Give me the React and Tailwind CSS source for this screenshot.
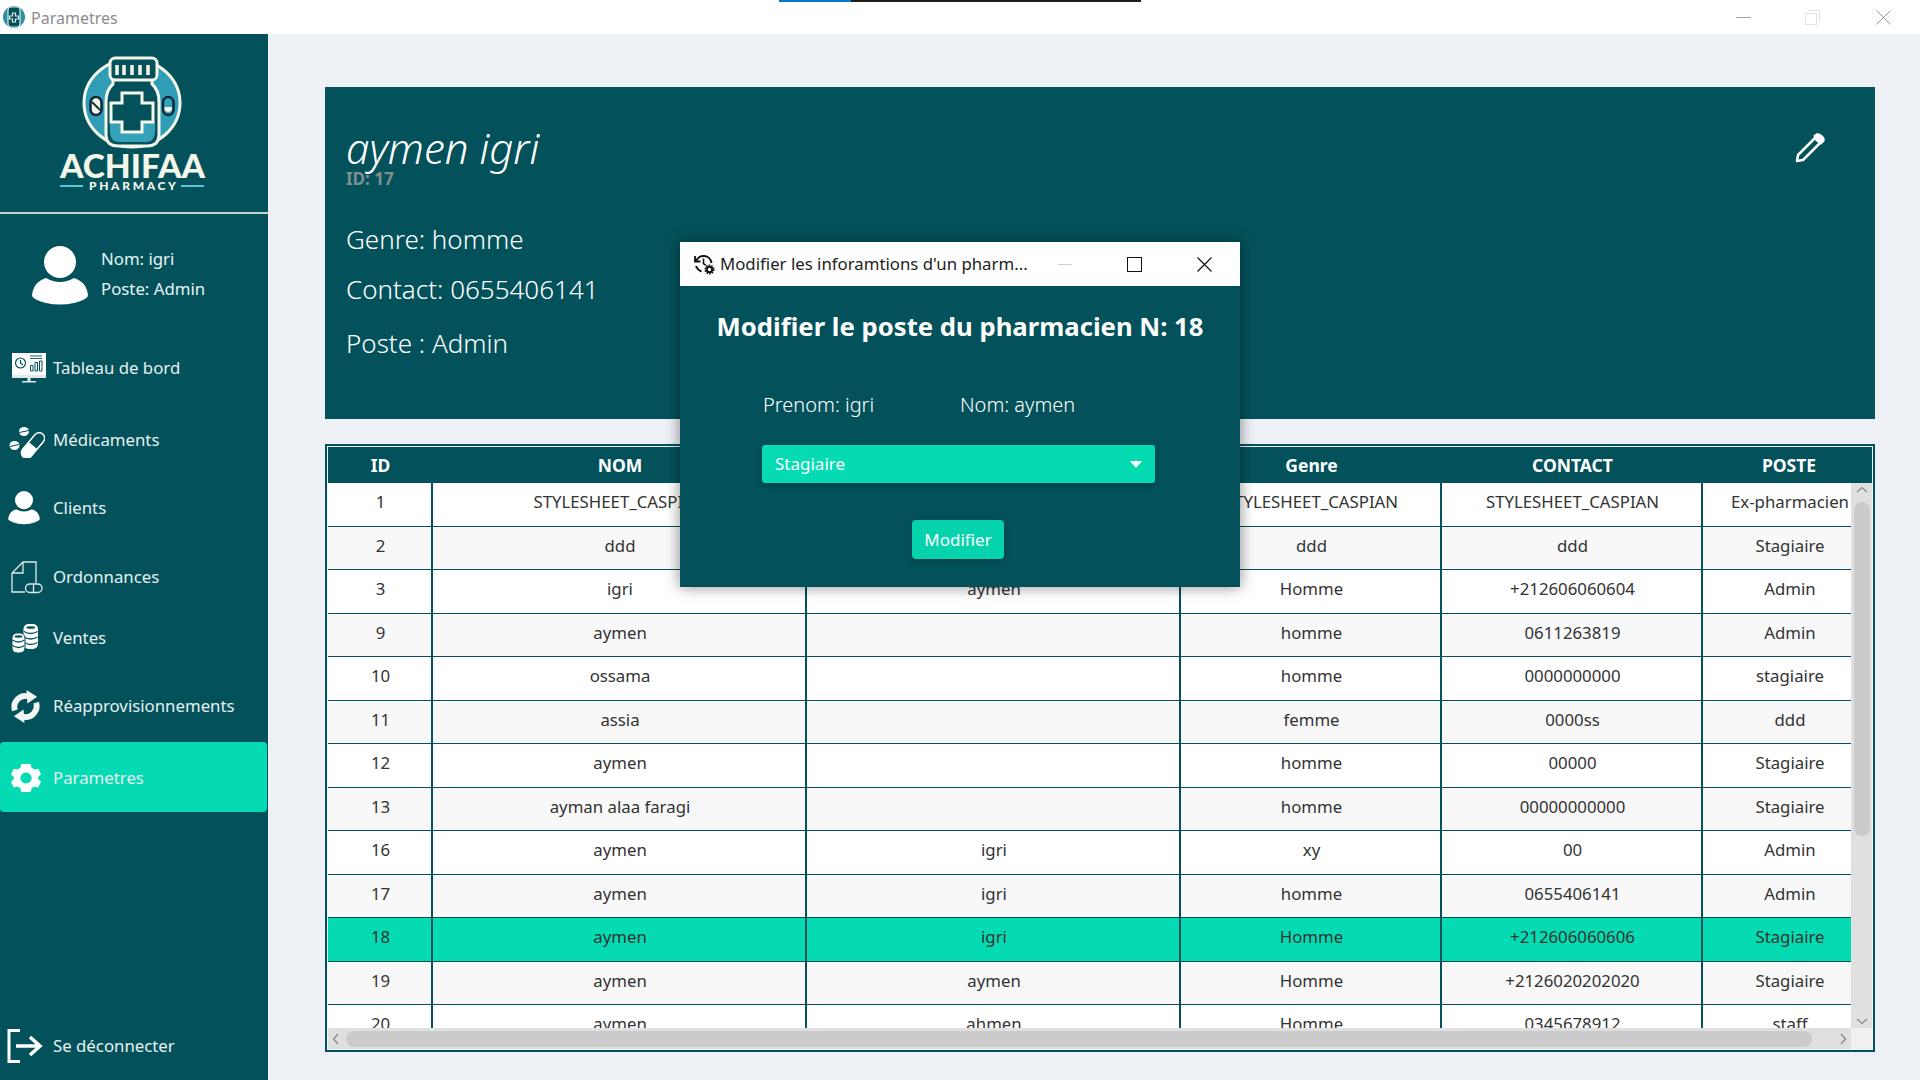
const TEAL = "#03525b";

const rows = [
  ["1", "STYLESHEET_CASPIAN", "STYLESHEET_CASPIAN", "STYLESHEET_CASPIAN", "STYLESHEET_CASPIAN", "Ex-pharmacien"],
  ["2", "ddd", "ddd", "ddd", "ddd", "Stagiaire"],
  ["3", "igri", "aymen", "Homme", "+212606060604", "Admin"],
  ["9", "aymen", "", "homme", "0611263819", "Admin"],
  ["10", "ossama", "", "homme", "0000000000", "stagiaire"],
  ["11", "assia", "", "femme", "0000ss", "ddd"],
  ["12", "aymen", "", "homme", "00000", "Stagiaire"],
  ["13", "ayman alaa faragi", "", "homme", "00000000000", "Stagiaire"],
  ["16", "aymen", "igri", "xy", "00", "Admin"],
  ["17", "aymen", "igri", "homme", "0655406141", "Admin"],
  ["18", "aymen", "igri", "Homme", "+212606060606", "Stagiaire"],
  ["19", "aymen", "aymen", "Homme", "+2126020202020", "Stagiaire"],
  ["20", "aymen", "ahmen", "Homme", "0345678912", "staff"],
];

const headers = ["ID", "NOM", "PRENOM", "Genre", "CONTACT", "POSTE"];

const Logo = () => (
  <svg viewBox="58 52 150 142" className="w-[150px] h-[142px] mr-[2px]">
    <ellipse cx="132" cy="103" rx="48" ry="44" fill="#2f9db5" stroke="#f4f6ea" strokeWidth="3" />
    <path d="M113 78 L113 84 Q106 90 106 102 V134 Q106 146 118 146 H147 Q159 146 159 134 V102 Q159 90 152 84 V78 Z" fill={TEAL} stroke="#f4f6ea" strokeWidth="3" strokeLinejoin="round" />
    <path d="M110 123 H155 V132 Q155 142 145 142 H120 Q110 142 110 132 Z" fill="#35a2ba" />
    <rect x="110" y="58" width="47" height="22" rx="5" fill={TEAL} stroke="#f4f6ea" strokeWidth="3" />
    <path d="M117 65 v10 M124 65 v10 M132 65 v10 M140 65 v10 M148 65 v10" stroke="#f4f6ea" strokeWidth="3.500" />
    <path d="M122 93 H142 V103 H153 V122 H142 V132 H122 V122 H111 V103 H122 Z" fill={TEAL} stroke="#f4f6ea" strokeWidth="3" />
    <rect x="90.500" y="97" width="11" height="18" rx="5.500" fill="#f4f6ea" stroke="#10283a" strokeWidth="2.500" />
    <path d="M92 102 l8 8" stroke="#10283a" strokeWidth="1.800" />
    <rect x="163" y="97" width="10.500" height="18" rx="5.200" fill="#35a2ba" stroke="#10283a" strokeWidth="2.500" />
    <path d="M164.500 107 h7.500 v3 q-3.700 4 -7.500 0 z" fill="#f4f6ea" />
    <text x="60" y="178" textLength="145" lengthAdjust="spacingAndGlyphs" fill="#f4f6ea" fontSize="32" fontWeight="900" fontFamily="Lato, sans-serif">ACHIFAA</text>
    <text x="89" y="190" textLength="87" fill="#f4f6ea" fontSize="12" fontWeight="900" fontFamily="Lato, sans-serif">PHARMACY</text>
    <path d="M60 186 H83 M181 186 H204" stroke="#5ec4d6" strokeWidth="2" />
  </svg>
);

const AppIcon = () => (
  <svg viewBox="0 0 24 24" className="w-[24px] h-[24px]">
    <circle cx="12" cy="12" r="11" fill="#2f8ea5" />
    <rect x="6" y="2" width="12" height="20" rx="3" fill={TEAL} stroke="#dfe8e4" strokeWidth="1.200" />
    <path d="M10.500 8 h3 v3 h3 v3 h-3 v3 h-3 v-3 h-3 v-3 h3 z" fill={TEAL} stroke="#dfe8e4" strokeWidth="1.200" />
  </svg>
);

const DashIcon = () => (
  <svg viewBox="0 0 34 30" className="w-[34px] h-[30px]">
    <rect x="0" y="0" width="34" height="22" fill="#fff" />
    <rect x="0" y="22" width="34" height="3" fill="#dfe9ea" />
    <rect x="15.500" y="25" width="3" height="3" fill="#dfe9ea" />
    <rect x="10" y="28" width="14" height="1.500" fill="#dfe9ea" />
    <circle cx="8.500" cy="10" r="5" fill="none" stroke={TEAL} strokeWidth="1.200" />
    <path d="M8.500 7 v3 l2.500 2" fill="none" stroke={TEAL} strokeWidth="1.200" />
    <path d="M18 3 h12 M18 5.500 h12" stroke={TEAL} strokeWidth="0.900" />
    <path d="M18.500 12.500 h2.500 v5.500 h-2.500 z M23 9.500 h2.500 v8.500 h-2.500 z M27.500 8 h2.500 v10 h-2.500 z" fill="none" stroke={TEAL} strokeWidth="1" />
  </svg>
);

const PillsIcon = () => (
  <svg viewBox="0 0 36 36" className="w-[36px] h-[36px]">
    <g transform="rotate(40 24 23.500)">
      <rect x="18.500" y="8.500" width="11" height="30" rx="5.500" fill="none" stroke="#fff" strokeWidth="1.500" />
      <path d="M18.500 23.500 h11 v9.500 a5.500 5.500 0 0 1 -11 0 z" fill="#fff" />
    </g>
    <ellipse cx="15" cy="9.500" rx="5" ry="4.500" fill="#fff" />
    <path d="M10 10.500 l10 -2" stroke={TEAL} strokeWidth="1.200" />
    <ellipse cx="5.500" cy="23.500" rx="5" ry="4.500" fill="#fff" />
    <path d="M1 24.500 l9 -2" stroke={TEAL} strokeWidth="1.200" />
  </svg>
);

const UserIcon = ({ className }) => (
  <svg viewBox="0 0 56 60" className={className}>
    <circle cx="28" cy="16" r="16" fill="#fff" />
    <path d="M0 50 q1 -14 14 -18 q14 8 28 0 q13 4 14 18 q-2 4 -14 7 q-14 3 -28 0 q-12 -3 -14 -7 z" fill="#fff" />
  </svg>
);

const OrdoIcon = () => (
  <svg viewBox="0 0 32 33" className="w-[32px] h-[33px]" fill="none" stroke="#dfe9ea" strokeWidth="1.300">
    <path d="M25 22 V1 H12 L1 12 V31 H14" />
    <path d="M12 1 V12 H1" />
    <rect x="14.500" y="23" width="16.500" height="8.500" rx="4.250" />
    <path d="M22.500 23 v8.500" />
  </svg>
);

const CoinsIcon = () => (
  <svg viewBox="0 0 26 29" className="w-[26px] h-[29px]">
    <rect x="11.500" y="0" width="14.500" height="25" rx="5" fill="#fff" />
    <ellipse cx="18.700" cy="3.500" rx="4.500" ry="1.300" fill={TEAL} />
    <path d="M12 7.500 Q18.700 11.500 25.500 7.500 M12 13 Q18.700 17 25.500 13 M12 18.500 Q18.700 22.500 25.500 18.500" fill="none" stroke={TEAL} strokeWidth="1.400" />
    <rect x="0" y="9" width="13" height="20" rx="5" fill="#fff" stroke={TEAL} strokeWidth="1" />
    <ellipse cx="6.500" cy="12.500" rx="4" ry="1.200" fill={TEAL} />
    <path d="M0.500 16 Q6.500 20 12.500 16 M0.500 21.500 Q6.500 25.500 12.500 21.500" fill="none" stroke={TEAL} strokeWidth="1.400" />
  </svg>
);

const SyncIcon = () => (
  <svg viewBox="0 0 30 34" className="w-[29px] h-[33px]">
    <g>
      <path d="M4 21 A11.500 11.500 0 0 1 18 6.500" fill="none" stroke="#f4f6f6" strokeWidth="6" />
      <path d="M16 0 L27 7 L17 14 Z" fill="#f4f6f6" />
    </g>
    <g transform="rotate(180 15 17)">
      <path d="M4 21 A11.500 11.500 0 0 1 18 6.500" fill="none" stroke="#f4f6f6" strokeWidth="6" />
      <path d="M16 0 L27 7 L17 14 Z" fill="#f4f6f6" />
    </g>
  </svg>
);

const GearIcon = () => (
  <svg viewBox="0 0 32 32" className="w-[30px] h-[30px]">
    <path
      fill="#fff"
      fillRule="evenodd"
      d="M11 1 h10 l1 4 l3 2 l4 -1 l3 6 l-3 3 v2 l3 3 l-3 6 l-4 -1 l-3 2 l-1 4 h-10 l-1 -4 l-3 -2 l-4 1 l-3 -6 l3 -3 v-2 l-3 -3 l3 -6 l4 1 l3 -2 z M16 10 a6 6 0 1 0 0.010 0 z"
    />
  </svg>
);

const LogoutIcon = () => (
  <svg viewBox="0 0 36 34" className="w-[36px] h-[34px]" fill="none" stroke="#fff">
    <path d="M13 1.500 H2 V32.500 H13" strokeWidth="3" />
    <path d="M9 17 H32 M23 8 L33 17 L23 26" strokeWidth="3.500" />
  </svg>
);

const PencilIcon = () => (
  <svg viewBox="0 0 30 30" className="w-[30px] h-[30px]" fill="none" stroke="#fff" strokeWidth="2.500">
    <path d="M2 28 L3 22 L20 5 L25 10 L8 27 Z" strokeLinejoin="round" />
    <path d="M20 3 L22 1.500 Q24 1 26 3 L28 5 Q29 7 28 8 L26 10 Z" fill="#fff" />
  </svg>
);

const HistoryGearIcon = () => (
  <svg viewBox="0 0 22 22" className="w-[22px] h-[22px]" fill="none" stroke="#111" strokeWidth="2">
    <path d="M3 8.500 A8 8 0 0 1 18.500 10" />
    <path d="M2 3 V8.500 H7.500" strokeWidth="1.800" />
    <path d="M10.500 5.500 V10.500 L13 12.500" strokeWidth="1.600" />
    <path d="M3 13 Q4.500 17 8.500 18.500" />
    <circle cx="16.500" cy="16.500" r="2.700" strokeWidth="2" />
    <circle cx="16.500" cy="16.500" r="4.300" strokeWidth="1.500" strokeDasharray="1.600 1.100" />
  </svg>
);

const CloseIcon = ({ color, width }) => (
  <svg viewBox="0 0 15 15" className="w-[15px] h-[15px] shrink-0" fill="none" stroke={color} strokeWidth={width}>
    <path d="M0.500 0.500 L14.500 14.500 M14.500 0.500 L0.500 14.500" />
  </svg>
);

const NavItem = ({ icon, label, active, height, iconClass }) => (
  <div className={`flex items-center rounded-[4px] ${height} ${active ? "bg-[#05dbb2] pt-[2px]" : ""}`}>
    <div className={`w-[53px] shrink-0 flex justify-center ${iconClass}`}>{icon}</div>
    <span className="text-[16.800px] text-[#e6f0f0]">{label}</span>
  </div>
);

const App = () => {
  return (
    <div className="relative flex flex-col w-[1920px] h-[1080px] overflow-hidden bg-[#edf0f5] font-['Noto_Sans',sans-serif] text-[#333]">
      {/* barre de titre */}
      <div className="flex items-center h-[34px] bg-white shrink-0 pl-[2px]">
        <AppIcon />
        <span className="ml-[5px] pt-[1px] text-[16px] text-[#8c8c8c]">Parametres</span>
        <div className="ml-auto flex items-center pr-[29px]">
          <div className="w-[15px] h-px bg-[#a8a8a8]" />
          <div className="relative ml-[54px] w-[12px] h-[12px] mt-[3px] border border-[#e2e2e2]">
            <div className="absolute -top-[4px] -right-[4px] w-[12px] h-[12px] border-t border-r border-[#e2e2e2]" />
          </div>
          <div className="ml-[59px]">
            <CloseIcon color="#9a9a9a" width="1" />
          </div>
        </div>
      </div>

      <div className="absolute top-0 left-[779px] flex w-[362px] h-[2px] bg-[#1e1e1e]">
        <div className="w-[72px] bg-[#0078d4]" />
      </div>

      <div className="flex flex-1 min-h-0">
        {/* menu lateral */}
        <aside className="flex flex-col w-[268px] shrink-0 bg-[#03525b]">
          <div className="flex justify-center h-[180px] border-b-2 border-[#c3d3d4] pt-[18px]">
            <Logo />
          </div>

          <div className="flex items-center h-[122px] pl-[32px] pt-[2px]">
            <UserIcon className="w-[56px] h-[60px]" />
            <div className="ml-[13px] mb-[4px] flex flex-col gap-[6px] text-[16.800px] leading-[24px] text-[#e6f4f4]">
              <span>Nom: igri</span>
              <span>Poste: Admin</span>
            </div>
          </div>

          <nav className="flex flex-col pt-[8px]">
            <NavItem icon={<DashIcon />} label="Tableau de bord" height="h-[48px]" iconClass="pl-[5px]" />
            <NavItem icon={<PillsIcon />} label="Médicaments" height="h-[48px] mt-[24px]" />
            <NavItem icon={<UserIcon className="w-[32px] h-[34px]" />} label="Clients" height="h-[48px] mt-[20px]" iconClass="pr-[5px]" />
            <NavItem icon={<OrdoIcon />} label="Ordonnances" height="h-[48px] mt-[21px]" />
            <NavItem icon={<CoinsIcon />} label="Ventes" height="h-[48px] mt-[13px]" iconClass="pr-[4px]" />
            <NavItem icon={<SyncIcon />} label="Réapprovisionnements" height="h-[48px] mt-[20px]" iconClass="pr-[3px]" />
            <NavItem icon={<GearIcon />} label="Parametres" height="h-[70px] mt-[12px] mr-[1px]" iconClass="pr-[2px]" active />
          </nav>

          <div className="mt-auto mb-[10px]">
            <NavItem icon={<LogoutIcon />} label="Se déconnecter" height="h-[48px]" iconClass="pr-[3px]" />
          </div>
        </aside>

        {/* contenu */}
        <main className="flex-1 min-w-0 flex flex-col pl-[57px] pr-[45px] pt-[53px] pb-[28px] gap-[25px]">
          <section className="relative h-[332px] shrink-0 bg-[#03525b] pl-[21px] pt-[35px] text-white">
            <h1 className="text-[42px] leading-[52px] italic font-light">aymen igri</h1>
            <p className="-mt-[5px] text-[17px] leading-[20px] font-bold text-[#7f8f90]">ID: 17</p>
            <div className="mt-[32px] flex flex-col text-[26px] leading-[37px] font-light">
              <p className="mb-[13px]">Genre: homme</p>
              <p className="mb-[17px]">Contact: 0655406141</p>
              <p>Poste : Admin</p>
            </div>
            <div className="absolute top-[46px] right-[50px]">
              <PencilIcon />
            </div>
          </section>

          {/* tableau */}
          <section className="flex-1 min-h-0 flex flex-col border-2 border-[#03525b] bg-white p-[1px] outline-1 outline-[#eef2f4] -outline-offset-[3px]">
            <div className="grid grid-cols-[105px_374px_374px_261px_261px_172px] shrink-0 h-[36px] items-center overflow-hidden bg-[#03525b] text-white text-[17.500px] font-bold text-center">
              {headers.map((h) => (
                <span key={h}>{h}</span>
              ))}
            </div>
            <div className="flex flex-1 min-h-0">
              <div className="flex-1 min-w-0 overflow-hidden">
                {rows.map((row, i) => (
                  <div
                    key={row[0]}
                    className={`grid grid-cols-[105px_374px_374px_261px_261px_172px] h-[43.500px] border-b-[1.500px] border-[#03525b] text-[16.800px] ${
                      row[0] === "18" ? "bg-[#05dbb2]" : i % 2 === 0 ? "bg-white" : "bg-[#f8f8f8]"
                    }`}
                  >
                    {row.map((cell, j) => (
                      <div
                        key={j}
                        className={`flex items-center justify-center whitespace-nowrap overflow-hidden pb-[5px] pl-[2px] ${
                          j < 5 ? "border-r-2 border-[#03525b]" : ""
                        }`}
                      >
                        {cell}
                      </div>
                    ))}
                  </div>
                ))}
              </div>
              <div className="relative w-[21px] shrink-0 bg-[#e0e0e0]">
                <div className="absolute top-[19px] left-[3px] w-[16px] h-[334px] rounded-[8px] bg-[#cbcbcb]" />
                <svg viewBox="0 0 12 7" className="absolute top-[3px] left-[5px] w-[12px] h-[7px]" fill="none" stroke="#8a8a8a" strokeWidth="1.300">
                  <path d="M1 6 L6 1.500 L11 6" />
                </svg>
                <svg viewBox="0 0 12 7" className="absolute bottom-[3px] left-[5px] w-[12px] h-[7px]" fill="none" stroke="#8a8a8a" strokeWidth="1.300">
                  <path d="M1 1 L6 5.500 L11 1" />
                </svg>
              </div>
            </div>
            <div className="flex h-[21px] shrink-0">
              <div className="relative flex-1 bg-[#e0e0e0]">
                <div className="absolute top-[3px] left-[18px] w-[1466px] h-[16px] rounded-[8px] bg-[#cbcbcb]" />
                <svg viewBox="0 0 7 12" className="absolute top-[5px] left-[4px] w-[7px] h-[12px]" fill="none" stroke="#8a8a8a" strokeWidth="1.300">
                  <path d="M6 1 L1.500 6 L6 11" />
                </svg>
                <svg viewBox="0 0 7 12" className="absolute top-[5px] right-[4px] w-[7px] h-[12px]" fill="none" stroke="#8a8a8a" strokeWidth="1.300">
                  <path d="M1 1 L5.500 6 L1 11" />
                </svg>
              </div>
              <div className="w-[21px] bg-[#f0f0f0]" />
            </div>
          </section>
        </main>
      </div>

      {/* fenetre de modification */}
      <div className="absolute top-[242px] left-[680px] w-[560px] h-[345px] flex flex-col bg-[#03525b] shadow-[0_0_14px_rgba(0,0,0,0.45)]">
        <div className="flex items-center h-[44px] shrink-0 bg-white pl-[13px] text-[16.800px] text-[#222]">
          <HistoryGearIcon />
          <span className="ml-[5px] w-[308px] whitespace-nowrap">Modifier les inforamtions d'un pharm...</span>
          <div className="ml-[30px] w-[14px] h-px bg-[#cfcfcf]" />
          <div className="ml-[55px] w-[15px] h-[15px] border-[1.500px] border-[#111]" />
          <div className="ml-[55px]">
            <CloseIcon color="#111" width="1.200" />
          </div>
        </div>
        <h2 className="mt-[22px] text-center text-[25.700px] leading-[38px] font-bold text-white">
          Modifier le poste du pharmacien N: 18
        </h2>
        <div className="mt-[44px] pl-[83px] flex text-[20px] leading-[30px] text-white font-light">
          <span className="w-[197px]">Prenom: igri</span>
          <span>Nom: aymen</span>
        </div>
        <div className="mt-[25px] ml-[82px] w-[393px] h-[38px] flex items-center rounded-[3px] bg-[#05dbb2] pl-[13px] pr-[13px] text-[17px] text-white shadow-[0_2px_6px_rgba(0,0,0,0.25)]">
          <span>Stagiaire</span>
          <div className="ml-auto w-0 h-0 border-l-[6px] border-r-[6px] border-t-[7px] border-l-transparent border-r-transparent border-t-white" />
        </div>
        <button className="mt-[37px] self-center ml-[-4px] w-[92px] h-[39px] rounded-[4px] bg-[#05d3ac] text-[17px] text-white shadow-[0_2px_6px_rgba(0,0,0,0.25)]">
          Modifier
        </button>
      </div>
    </div>
  );
};

export default App;
